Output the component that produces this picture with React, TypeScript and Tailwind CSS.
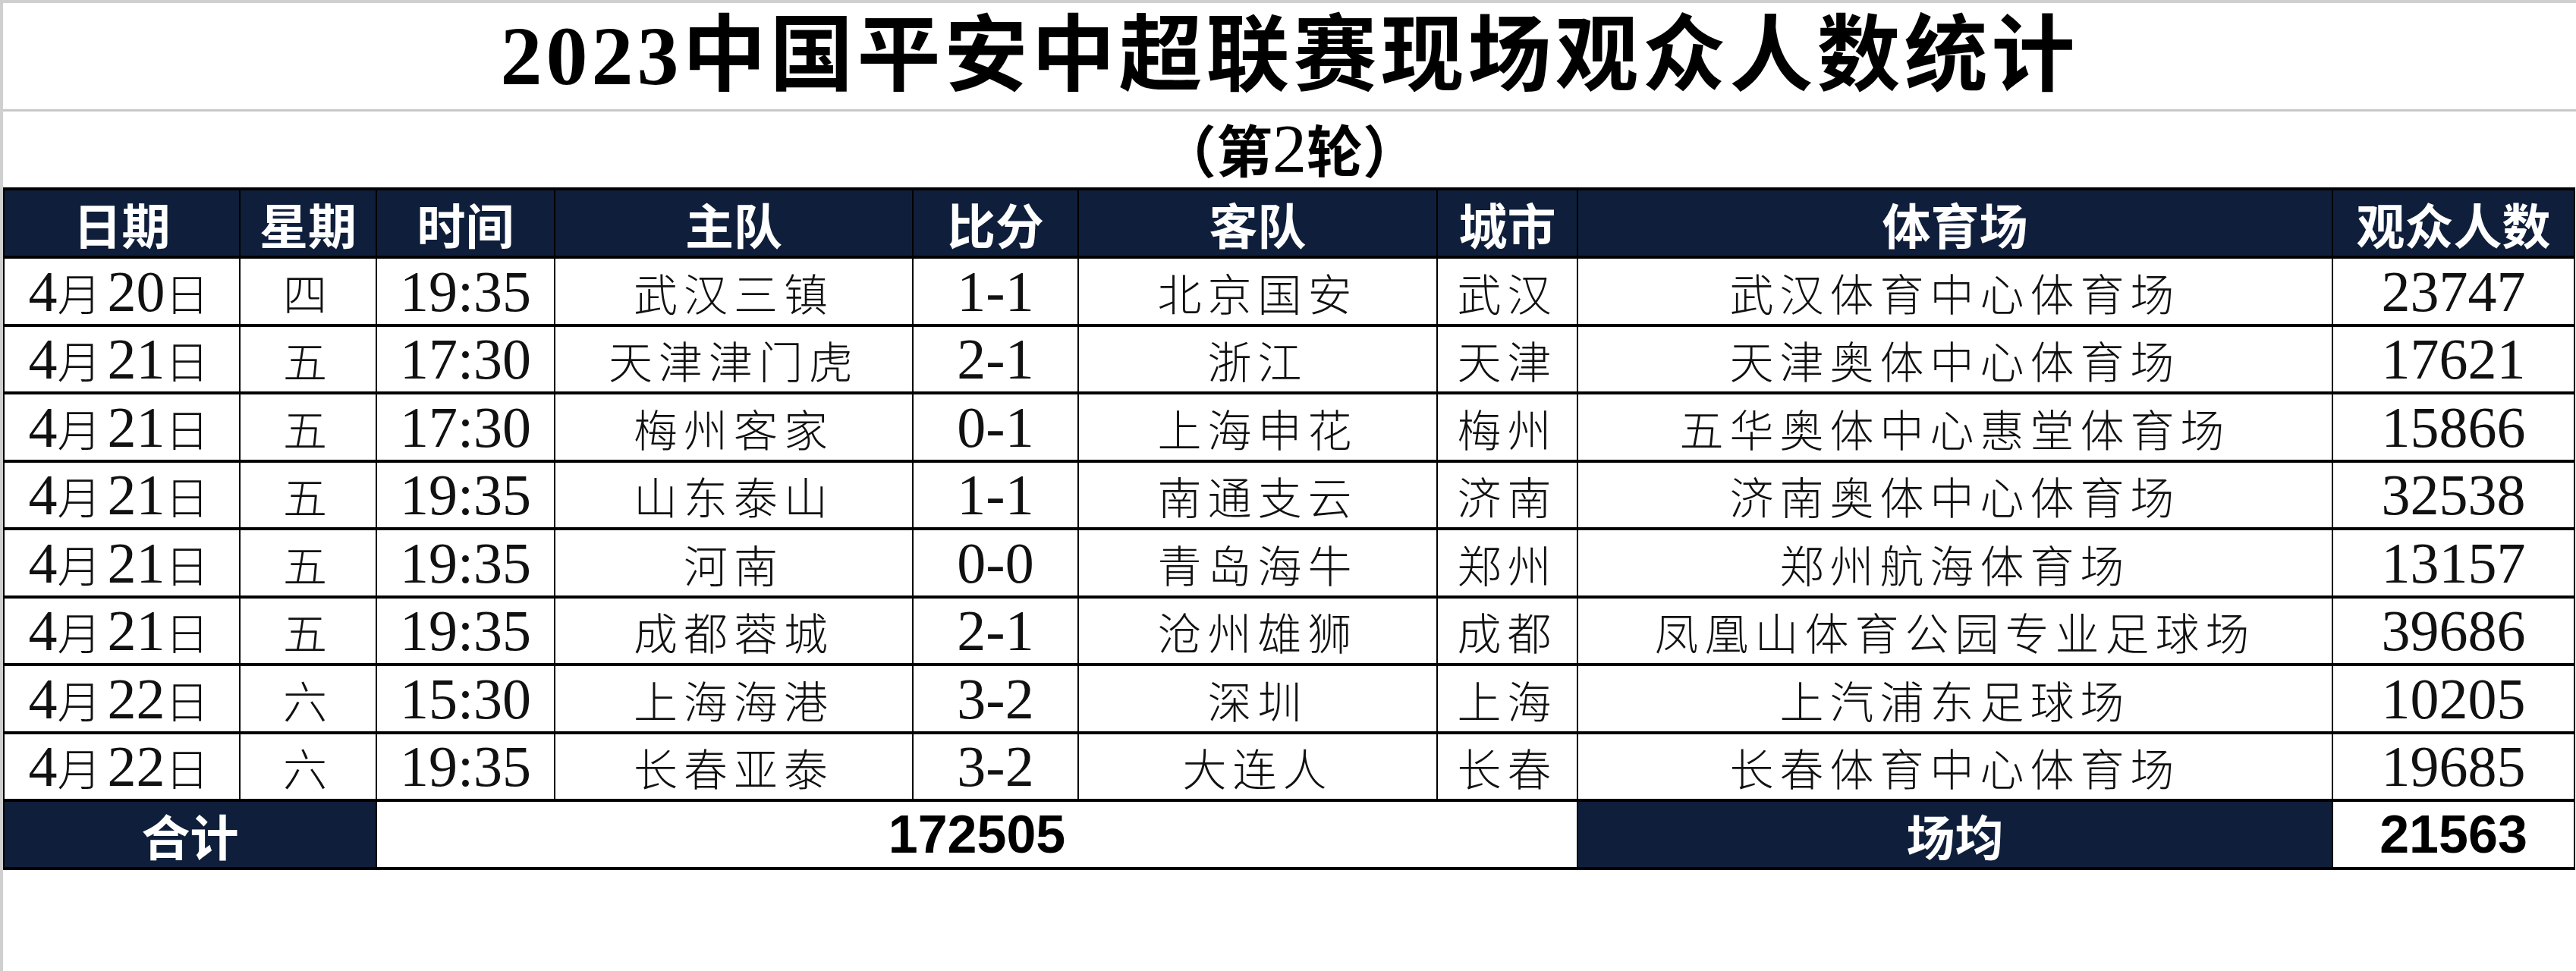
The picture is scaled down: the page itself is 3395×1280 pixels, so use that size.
import React from "react";

const rows = [
  ["4月20日", "四", "19:35", "武汉三镇", "1-1", "北京国安", "武汉", "武汉体育中心体育场", "23747"],
  ["4月21日", "五", "17:30", "天津津门虎", "2-1", "浙江", "天津", "天津奥体中心体育场", "17621"],
  ["4月21日", "五", "17:30", "梅州客家", "0-1", "上海申花", "梅州", "五华奥体中心惠堂体育场", "15866"],
  ["4月21日", "五", "19:35", "山东泰山", "1-1", "南通支云", "济南", "济南奥体中心体育场", "32538"],
  ["4月21日", "五", "19:35", "河南", "0-0", "青岛海牛", "郑州", "郑州航海体育场", "13157"],
  ["4月21日", "五", "19:35", "成都蓉城", "2-1", "沧州雄狮", "成都", "凤凰山体育公园专业足球场", "39686"],
  ["4月22日", "六", "15:30", "上海海港", "3-2", "深圳", "上海", "上汽浦东足球场", "10205"],
  ["4月22日", "六", "19:35", "长春亚泰", "3-2", "大连人", "长春", "长春体育中心体育场", "19685"],
];

const headers = ["日期", "星期", "时间", "主队", "比分", "客队", "城市", "体育场", "观众人数"];
const widths = [311, 180, 235, 472, 218, 473, 185, 995, 319];

// digits in a serif face, hanzi a bit smaller and spaced out like the sheet
function Mixed({ text }: { text: string }) {
  const parts = text.match(/[\u4e00-\u9fff]+|[^\u4e00-\u9fff]+/g) || [];
  return (
    <>
      {parts.map((p, i) =>
        /[\u4e00-\u9fff]/.test(p) ? (
          <span key={i} className="font-['Noto_Sans_CJK_SC',sans-serif] font-light text-[58px] tracking-[8px]">
            {p}
          </span>
        ) : (
          <span key={i}>{p}</span>
        )
      )}
    </>
  );
}

export default function App() {
  return (
    <div className="w-[3395px] h-[1280px] bg-white border-l-4 border-t-4 border-[#cfcfcf] overflow-hidden">
      {/* title */}
      <div className="h-[143px] flex items-center justify-center border-b-[3px] border-[#c8c8c8]">
        <h1 className="font-['Liberation_Serif','Noto_Sans_CJK_SC',serif] font-bold text-[110px] leading-none tracking-[5px] text-black">
          2023中国平安中超联赛现场观众人数统计
        </h1>
      </div>
      <div className="h-[100px] flex items-center justify-center">
        <p className="font-['Noto_Sans_CJK_SC',serif] font-bold text-[74px] leading-none text-black">
          （第<span className="font-['Liberation_Serif',serif] font-normal text-[90px]">2</span>轮）
        </p>
      </div>

      <table className="table-fixed border-collapse w-[3388px]">
        <colgroup>
          {widths.map((w, i) => (
            <col key={i} style={{ width: w }} />
          ))}
        </colgroup>
        <thead>
          <tr className="h-[90px]">
            {headers.map((h) => (
              <th
                key={h}
                className="bg-[#0f1f3b] border-x-2 border-y-4 border-black text-white font-['Noto_Sans_CJK_SC',sans-serif] font-bold text-[64px] leading-none text-center align-middle p-0"
              >
                {h}
              </th>
            ))}
          </tr>
        </thead>
        <tbody>
          {rows.map((r, ri) => (
            <tr key={ri} className="h-[89.5px]">
              {r.map((c, ci) => (
                <td
                  key={ci}
                  className="border-x-2 border-y-4 border-black text-center align-middle p-0 font-['Liberation_Serif','Noto_Sans_CJK_SC',serif] text-[76px] leading-none text-[#111] whitespace-nowrap"
                >
                  <Mixed text={c} />
                </td>
              ))}
            </tr>
          ))}
          <tr className="h-[90px]">
            <td
              colSpan={2}
              className="bg-[#0f1f3b] border-x-2 border-y-4 border-black text-white font-['Noto_Sans_CJK_SC',sans-serif] font-bold text-[64px] leading-none text-center align-middle p-0"
            >
              合计
            </td>
            <td
              colSpan={5}
              className="border-x-2 border-y-4 border-black text-center align-middle p-0 font-['Liberation_Sans',sans-serif] font-bold text-[70px] leading-none text-black"
            >
              172505
            </td>
            <td className="bg-[#0f1f3b] border-x-2 border-y-4 border-black text-white font-['Noto_Sans_CJK_SC',sans-serif] font-bold text-[64px] leading-none text-center align-middle p-0">
              场均
            </td>
            <td className="border-x-2 border-y-4 border-black text-center align-middle p-0 font-['Liberation_Sans',sans-serif] font-bold text-[70px] leading-none text-black">
              21563
            </td>
          </tr>
        </tbody>
      </table>
    </div>
  );
}
